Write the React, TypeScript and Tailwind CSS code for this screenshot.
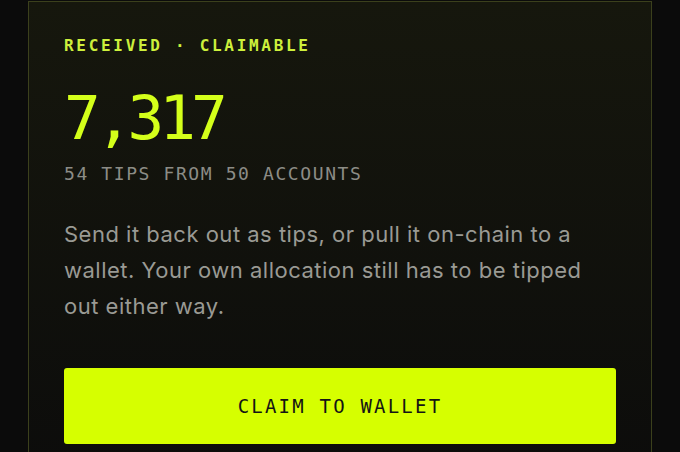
import React from "react";

export default function App() {
  return (
    <div className="w-[680px] h-[452px] overflow-hidden bg-[#0b0b0b] pl-[28px] pt-[1px]">
      <div className="flex flex-col items-start w-[624px] h-[480px] border border-[#3b401c] bg-gradient-to-b from-[#16170d] to-[#0c0c0b] px-[35px] pt-[34px] font-['DejaVu_Sans_Mono',monospace]">
        <div className="text-[16px] leading-[20px] font-bold tracking-[2.7px] text-[#cdf03c]">
          RECEIVED · CLAIMABLE
        </div>
        <div className="mt-[30px] text-[61px] leading-[64px] tracking-[-5px] text-[#d4ff1a]">
          7,317
        </div>
        <div className="mt-[13px] text-[18px] leading-[22px] tracking-[1.6px] text-[#8c8c86]">
          54 TIPS FROM 50 ACCOUNTS
        </div>
        <p className="mt-[31px] max-w-[540px] text-[22px] leading-[36px] tracking-[0.5px] text-[#9a9a94] font-['Inter',sans-serif]">
          Send it back out as tips, or pull it on-chain to a wallet. Your own allocation still has to be tipped out either way.
        </p>
        <button className="mt-[44px] w-[552px] h-[76px] rounded-[3px] bg-[#d6ff00] text-[19px] tracking-[2.2px] text-[#141414]">
          CLAIM TO WALLET
        </button>
      </div>
    </div>
  );
}
